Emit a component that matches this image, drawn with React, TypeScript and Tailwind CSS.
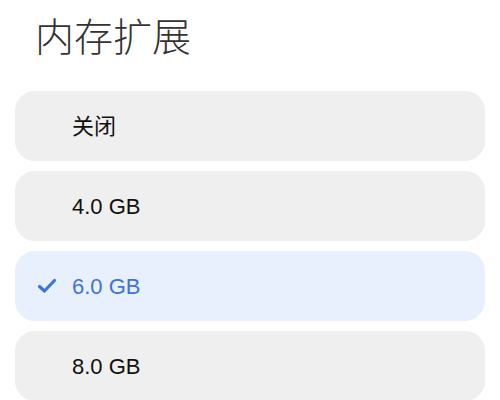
import React from 'react';

const options = [
    { label: '关闭', selected: false },
    { label: '4.0 GB', selected: false },
    { label: '6.0 GB', selected: true },
    { label: '8.0 GB', selected: false },
];

const font = { fontFamily: '"Liberation Sans", "Noto Sans CJK SC", sans-serif' };

export default function App() {
    return (
        <div className="w-[500px] h-[400px] overflow-hidden bg-white" style={font}>
            <h1 className="pl-[35px] pt-[18px] mb-[34px] text-[39px] leading-[39px] font-light text-[#333333]">
                内存扩展
            </h1>
            <div className="flex flex-col gap-[10px] px-[15px]">
                {options.map((o) => (
                    <div
                        key={o.label}
                        className={`h-[70px] shrink-0 rounded-[20px] flex items-center ${o.selected ? 'bg-[#e9f0fd]' : 'bg-[#efefef]'}`}
                    >
                        <div className="w-[57px] shrink-0 flex pl-[22px]">
                            {o.selected && (
                                <svg width="20" height="16" viewBox="0 0 20 16">
                                    <polyline
                                        points="2.5,8.5 7.5,13 17.5,2.5"
                                        fill="none"
                                        stroke="#3d74d6"
                                        strokeWidth="3.2"
                                        strokeLinecap="round"
                                        strokeLinejoin="round"
                                    />
                                </svg>
                            )}
                        </div>
                        <span className={`text-[22px] ${o.selected ? 'text-[#3d74d6]' : 'text-[#111111]'}`}>
                            {o.label}
                        </span>
                    </div>
                ))}
            </div>
        </div>
    );
}
